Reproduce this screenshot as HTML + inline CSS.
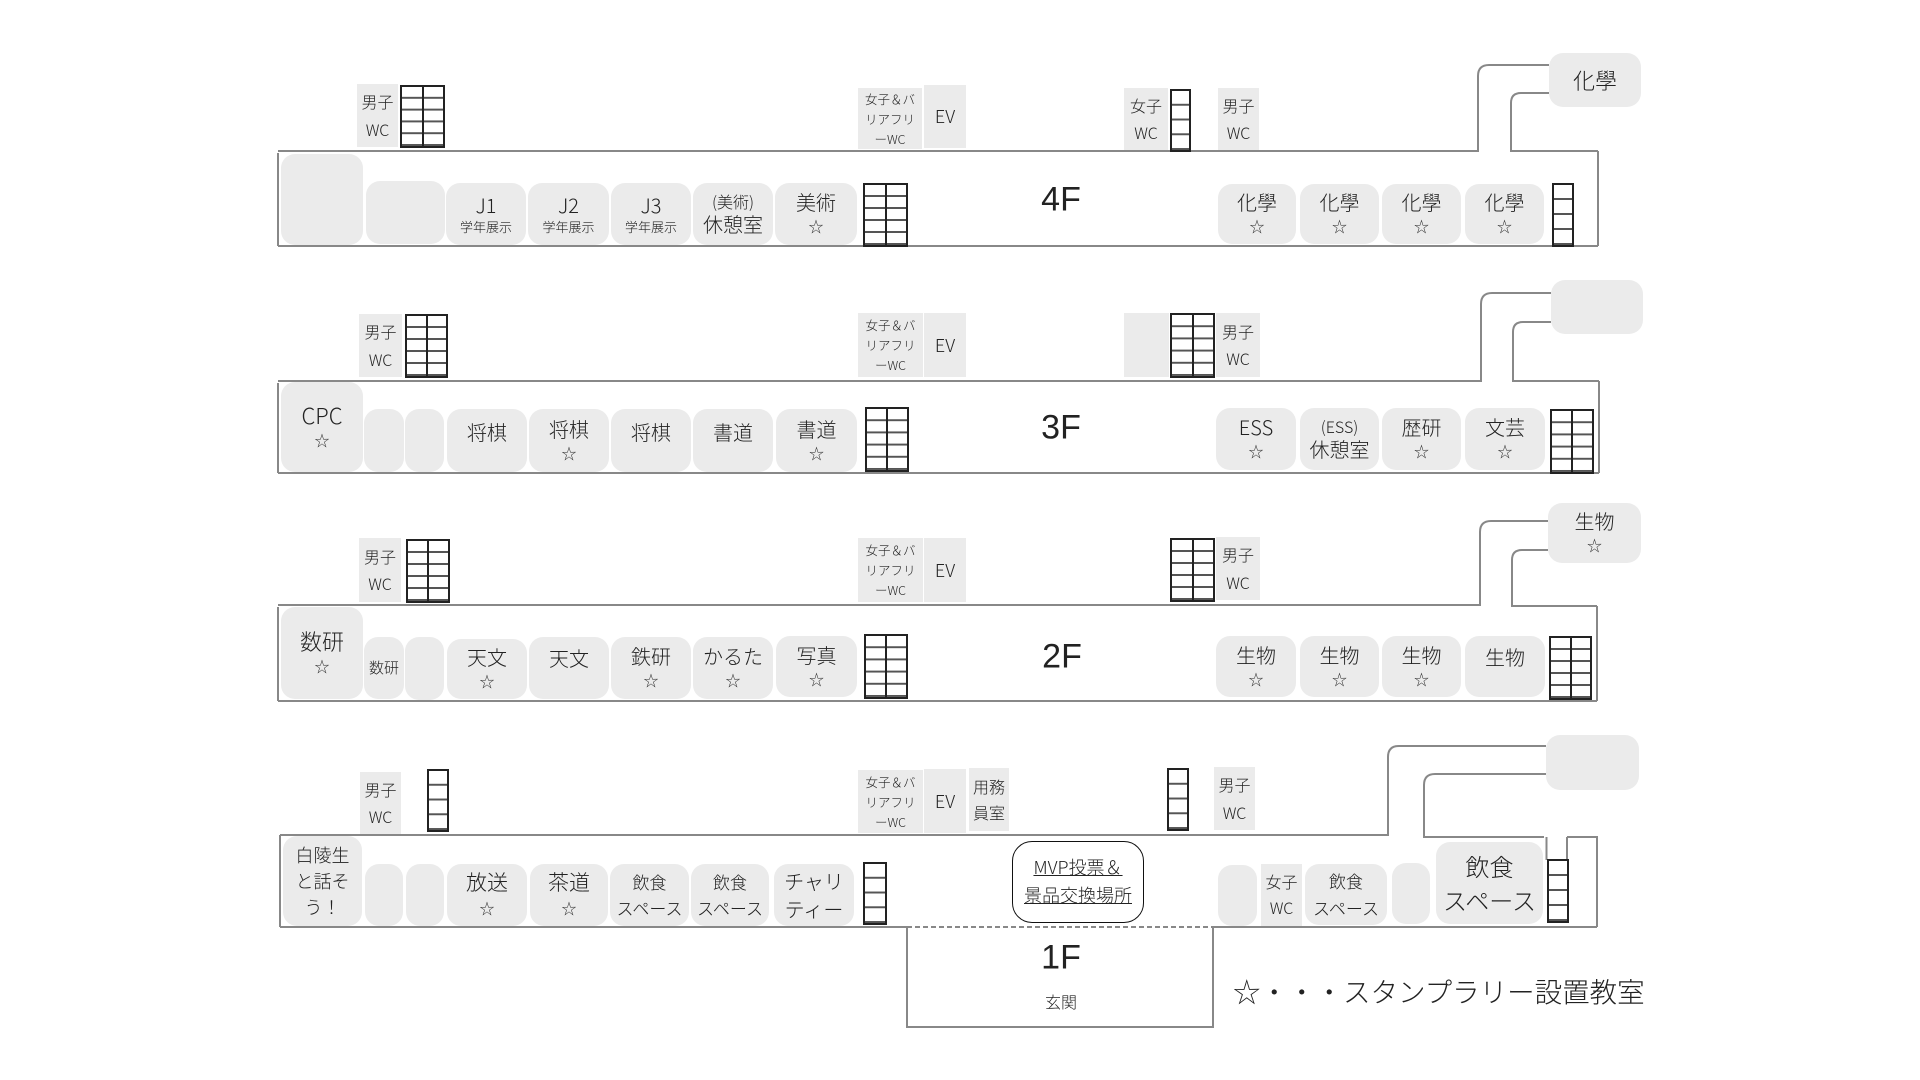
<!DOCTYPE html>
<html><head><meta charset="utf-8">
<style>
body{margin:0;width:1920px;height:1080px;background:#fff;position:relative;overflow:hidden;font-family:"Noto Sans CJK JP","Liberation Sans",sans-serif;font-weight:300;color:#222}
.r,.w{position:absolute;background:#ebebeb;box-sizing:border-box;display:flex;flex-direction:column;align-items:center;justify-content:center;text-align:center;font-size:20px;line-height:1.3;white-space:nowrap}
.r{border-radius:14px}
.w{font-size:16px;line-height:1.7}
.w.sm{font-size:12.5px;line-height:20px}
.st{font-size:15px;line-height:1.6}
.sm2{font-size:13px;line-height:1.4}
.s1,.s2{position:absolute;box-sizing:border-box;border:2px solid #222}
.lbl{position:absolute;font-size:34px;transform:translate(-50%,-50%);white-space:nowrap;font-family:"Liberation Sans","Noto Sans CJK JP",sans-serif;font-weight:400}
svg{position:absolute;left:0;top:0}
</style></head><body>
<svg width="1920" height="1080" fill="none" stroke="#888" stroke-width="2">
<path d="M278 151 H1478 V76 Q1478 65 1489 65 H1549"/>
<path d="M1598 151 H1511 V103 Q1511 93 1521 93 H1549"/>
<path d="M1598 151 V246 M278 246 H1598 M278 153 V246"/>
<path d="M278 381 H1481 V304 Q1481 293 1492 293 H1551"/>
<path d="M1599 381 H1513 V332 Q1513 322 1523 322 H1551"/>
<path d="M1599 381 V473 M278 473 H1599 M278 383 V473"/>
<path d="M278 605 H1480 V532 Q1480 521 1491 521 H1548"/>
<path d="M1597 606 H1512 V560 Q1512 550 1522 550 H1548"/>
<path d="M1597 606 V701 M278 701 H1597 M278 607 V701"/>
<path d="M280 835 H1388 V757 Q1388 746 1399 746 H1546"/>
<path d="M1544 837 H1424 V785 Q1424 774 1435 774 H1546"/>
<path d="M1546.5 837 V860 M1567 837 H1597 V927 M1567 837 V860"/>
<path d="M280 835 V927 M280 927 H907 M1213 927 H1597"/>
<path d="M907 927 H1213" stroke-dasharray="5 3"/>
<path d="M907 927 V1027 H1213 V927"/>
</svg>

<div class="w" style="left:357px;top:84px;width:41px;height:63px">男子<br>WC</div>
<div class="s2" style="left:400px;top:85px;width:45px;height:63px;background:linear-gradient(#222,#222) center/2px 100% no-repeat,linear-gradient(transparent calc(100% - 2px),#555 0) 0 0/100% 11.8px repeat-y"></div>
<div class="w sm" style="left:858px;top:88px;width:64px;height:61px">女子＆バ<br>リアフリ<br>ーWC</div>
<div class="w" style="left:924px;top:85px;width:42px;height:63px;font-size:18px">EV</div>
<div class="w" style="left:1124px;top:88px;width:44px;height:62px">女子<br>WC</div>
<div class="s1" style="left:1170px;top:89px;width:21px;height:63px;background:linear-gradient(transparent calc(100% - 2px),#555 0) 0 0/100% 14.75px repeat-y"></div>
<div class="w" style="left:1218px;top:88px;width:41px;height:62px">男子<br>WC</div>

<div class="r" style="left:281px;top:154px;width:82px;height:91px"></div>
<div class="r" style="left:366px;top:181px;width:79px;height:63px"></div>
<div class="r" style="left:446px;top:183px;width:80px;height:62px">J1<span class="sm2">学年展示</span></div>
<div class="r" style="left:528px;top:183px;width:81px;height:62px">J2<span class="sm2">学年展示</span></div>
<div class="r" style="left:611px;top:183px;width:80px;height:62px">J3<span class="sm2">学年展示</span></div>
<div class="r" style="left:693px;top:183px;width:80px;height:62px"><span style="font-size:16px">(美術)</span>休憩室</div>
<div class="r" style="left:775px;top:183px;width:82px;height:62px">美術<span class="st">☆</span></div>
<div class="s2" style="left:863px;top:183px;width:45px;height:64px;background:linear-gradient(#222,#222) center/2px 100% no-repeat,linear-gradient(transparent calc(100% - 2px),#555 0) 0 0/100% 12px repeat-y"></div>
<div class="lbl" style="left:1061px;top:200px">4F</div>
<div class="r" style="left:1218px;top:184px;width:78px;height:60px">化學<span class="st">☆</span></div>
<div class="r" style="left:1300px;top:184px;width:79px;height:60px">化學<span class="st">☆</span></div>
<div class="r" style="left:1382px;top:184px;width:79px;height:60px">化學<span class="st">☆</span></div>
<div class="r" style="left:1465px;top:184px;width:79px;height:60px">化學<span class="st">☆</span></div>
<div class="s1" style="left:1552px;top:183px;width:22px;height:64px;background:linear-gradient(transparent calc(100% - 2px),#555 0) 0 0/100% 15px repeat-y"></div>
<div class="r" style="left:1549px;top:53px;width:92px;height:54px;font-size:22px">化學</div>

<div class="w" style="left:359px;top:314px;width:43px;height:63px">男子<br>WC</div>
<div class="s2" style="left:405px;top:314px;width:43px;height:64px;background:linear-gradient(#222,#222) center/2px 100% no-repeat,linear-gradient(transparent calc(100% - 2px),#555 0) 0 0/100% 12px repeat-y"></div>
<div class="w sm" style="left:858px;top:313px;width:65px;height:64px">女子＆バ<br>リアフリ<br>ーWC</div>
<div class="w" style="left:924px;top:313px;width:42px;height:64px;font-size:18px">EV</div>
<div class="w" style="left:1124px;top:313px;width:45px;height:64px"></div>
<div class="s2" style="left:1170px;top:313px;width:45px;height:65px;background:linear-gradient(#222,#222) center/2px 100% no-repeat,linear-gradient(transparent calc(100% - 2px),#555 0) 0 0/100% 12.2px repeat-y"></div>
<div class="w" style="left:1216px;top:313px;width:44px;height:64px">男子<br>WC</div>

<div class="r" style="left:281px;top:382px;width:82px;height:90px;font-size:22px">CPC<span class="st">☆</span></div>
<div class="r" style="left:364px;top:409px;width:40px;height:63px"></div>
<div class="r" style="left:405px;top:409px;width:39px;height:63px"></div>
<div class="r" style="left:447px;top:409px;width:80px;height:63px;justify-content:flex-start;padding-top:10px">将棋</div>
<div class="r" style="left:529px;top:409px;width:80px;height:63px">将棋<span class="st">☆</span></div>
<div class="r" style="left:611px;top:409px;width:80px;height:63px;justify-content:flex-start;padding-top:10px">将棋</div>
<div class="r" style="left:693px;top:409px;width:80px;height:63px;justify-content:flex-start;padding-top:10px">書道</div>
<div class="r" style="left:776px;top:409px;width:81px;height:63px">書道<span class="st">☆</span></div>
<div class="s2" style="left:865px;top:407px;width:44px;height:65px;background:linear-gradient(#222,#222) center/2px 100% no-repeat,linear-gradient(transparent calc(100% - 2px),#555 0) 0 0/100% 12.2px repeat-y"></div>
<div class="lbl" style="left:1061px;top:428px">3F</div>
<div class="r" style="left:1216px;top:408px;width:80px;height:62px">ESS<span class="st">☆</span></div>
<div class="r" style="left:1300px;top:408px;width:79px;height:62px"><span style="font-size:16px">(ESS)</span>休憩室</div>
<div class="r" style="left:1382px;top:408px;width:79px;height:62px">歴研<span class="st">☆</span></div>
<div class="r" style="left:1465px;top:408px;width:80px;height:62px">文芸<span class="st">☆</span></div>
<div class="s2" style="left:1550px;top:409px;width:44px;height:65px;background:linear-gradient(#222,#222) center/2px 100% no-repeat,linear-gradient(transparent calc(100% - 2px),#555 0) 0 0/100% 12.2px repeat-y"></div>
<div class="r" style="left:1551px;top:280px;width:92px;height:54px"></div>

<div class="w" style="left:359px;top:538px;width:42px;height:64px">男子<br>WC</div>
<div class="s2" style="left:406px;top:539px;width:44px;height:64px;background:linear-gradient(#222,#222) center/2px 100% no-repeat,linear-gradient(transparent calc(100% - 2px),#555 0) 0 0/100% 12px repeat-y"></div>
<div class="w sm" style="left:858px;top:538px;width:65px;height:64px">女子＆バ<br>リアフリ<br>ーWC</div>
<div class="w" style="left:924px;top:538px;width:42px;height:64px;font-size:18px">EV</div>
<div class="s2" style="left:1170px;top:538px;width:45px;height:64px;background:linear-gradient(#222,#222) center/2px 100% no-repeat,linear-gradient(transparent calc(100% - 2px),#555 0) 0 0/100% 12px repeat-y"></div>
<div class="w" style="left:1216px;top:537px;width:44px;height:63px">男子<br>WC</div>

<div class="r" style="left:281px;top:607px;width:82px;height:92px;font-size:22px">数研<span class="st">☆</span></div>
<div class="r" style="left:364px;top:637px;width:40px;height:62px;font-size:15px">数研</div>
<div class="r" style="left:405px;top:637px;width:39px;height:63px"></div>
<div class="r" style="left:447px;top:639px;width:80px;height:60px">天文<span class="st">☆</span></div>
<div class="r" style="left:529px;top:637px;width:80px;height:62px;justify-content:flex-start;padding-top:8px">天文</div>
<div class="r" style="left:611px;top:637px;width:80px;height:62px">鉄研<span class="st">☆</span></div>
<div class="r" style="left:693px;top:637px;width:80px;height:62px">かるた<span class="st">☆</span></div>
<div class="r" style="left:776px;top:636px;width:81px;height:61px">写真<span class="st">☆</span></div>
<div class="s2" style="left:864px;top:634px;width:44px;height:65px;background:linear-gradient(#222,#222) center/2px 100% no-repeat,linear-gradient(transparent calc(100% - 2px),#555 0) 0 0/100% 12.2px repeat-y"></div>
<div class="lbl" style="left:1062px;top:657px">2F</div>
<div class="r" style="left:1216px;top:636px;width:80px;height:61px">生物<span class="st">☆</span></div>
<div class="r" style="left:1300px;top:636px;width:79px;height:61px">生物<span class="st">☆</span></div>
<div class="r" style="left:1382px;top:636px;width:79px;height:61px">生物<span class="st">☆</span></div>
<div class="r" style="left:1465px;top:636px;width:80px;height:61px;justify-content:flex-start;padding-top:8px">生物</div>
<div class="s2" style="left:1549px;top:636px;width:43px;height:64px;background:linear-gradient(#222,#222) center/2px 100% no-repeat,linear-gradient(transparent calc(100% - 2px),#555 0) 0 0/100% 12px repeat-y"></div>
<div class="r" style="left:1548px;top:503px;width:93px;height:60px">生物<span class="st">☆</span></div>

<div class="w" style="left:360px;top:772px;width:41px;height:62px">男子<br>WC</div>
<div class="s1" style="left:427px;top:769px;width:22px;height:63px;background:linear-gradient(transparent calc(100% - 2px),#555 0) 0 0/100% 14.75px repeat-y"></div>
<div class="w sm" style="left:858px;top:770px;width:65px;height:63px">女子＆バ<br>リアフリ<br>ーWC</div>
<div class="w" style="left:924px;top:769px;width:42px;height:64px;font-size:18px">EV</div>
<div class="w" style="left:969px;top:768px;width:40px;height:63px;line-height:1.6">用務<br>員室</div>
<div class="s1" style="left:1167px;top:768px;width:22px;height:63px;background:linear-gradient(transparent calc(100% - 2px),#555 0) 0 0/100% 14.75px repeat-y"></div>
<div class="w" style="left:1214px;top:767px;width:41px;height:63px">男子<br>WC</div>

<div class="r" style="left:283px;top:836px;width:79px;height:90px;font-size:18px;line-height:1.45">白陵生<br>と話そ<br>う！</div>
<div class="r" style="left:365px;top:864px;width:38px;height:62px"></div>
<div class="r" style="left:406px;top:864px;width:38px;height:62px"></div>
<div class="r" style="left:447px;top:864px;width:80px;height:62px;font-size:21px">放送<span class="st">☆</span></div>
<div class="r" style="left:530px;top:864px;width:78px;height:62px;font-size:21px">茶道<span class="st">☆</span></div>
<div class="r" style="left:610px;top:864px;width:79px;height:62px;font-size:17px;line-height:1.55">飲食<br>スペース</div>
<div class="r" style="left:691px;top:864px;width:78px;height:62px;font-size:17px;line-height:1.55">飲食<br>スペース</div>
<div class="r" style="left:774px;top:864px;width:80px;height:62px;line-height:1.4">チャリ<br>ティー</div>
<div class="s1" style="left:863px;top:862px;width:24px;height:63px;background:linear-gradient(transparent calc(100% - 2px),#555 0) 0 0/100% 14.75px repeat-y"></div>
<div style="position:absolute;left:1012px;top:841px;width:132px;height:82px;box-sizing:border-box;border:1.5px solid #111;border-radius:20px;display:flex;align-items:center;justify-content:center;text-align:center;font-size:18px;line-height:1.55;text-decoration:underline">MVP投票＆<br>景品交換場所</div>
<div class="lbl" style="left:1061px;top:958px">1F</div>
<div class="lbl" style="left:1061px;top:1001px;font-size:16px;font-family:'Noto Sans CJK JP',sans-serif;font-weight:300">玄関</div>
<div class="r" style="left:1218px;top:865px;width:39px;height:61px"></div>
<div class="w" style="left:1261px;top:864px;width:41px;height:62px;line-height:1.6">女子<br>WC</div>
<div class="r" style="left:1305px;top:864px;width:82px;height:61px;font-size:17px;line-height:1.55">飲食<br>スペース</div>
<div class="r" style="left:1392px;top:863px;width:38px;height:61px"></div>
<div class="r" style="left:1436px;top:842px;width:107px;height:82px;font-size:24px;line-height:1.4">飲食<br>スペース</div>
<div class="s1" style="left:1547px;top:859px;width:22px;height:64px;background:linear-gradient(transparent calc(100% - 2px),#555 0) 0 0/100% 15px repeat-y"></div>
<div class="r" style="left:1546px;top:735px;width:93px;height:55px"></div>

<div style="position:absolute;left:1233px;top:970px;font-size:27.5px;line-height:40px;white-space:nowrap">☆・・・スタンプラリー設置教室</div>
</body></html>
